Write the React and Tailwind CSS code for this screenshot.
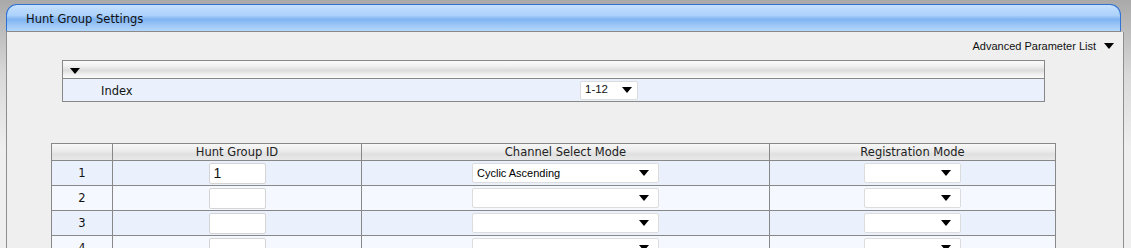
import React from "react";

const Tri = ({ className = "" }) => (
  <svg width="10" height="6" viewBox="0 0 10 6" className={className}>
    <path d="M0 0 L10 0 L5 6 Z" fill="#000" />
  </svg>
);

const Select = ({ w, text }) => (
  <div
    className={`${w} h-[20px] bg-white border border-[#dcdcdc] rounded-[2px] flex items-center justify-between pl-[4px] pr-[9px] font-['Liberation_Sans',Arial,sans-serif] text-[11px] text-black`}
  >
    <span>{text}</span>
    <Tri />
  </div>
);

const rows = [
  { n: 1, id: "1", mode: "Cyclic Ascending" },
  { n: 2, id: "", mode: "" },
  { n: 3, id: "", mode: "" },
  { n: 4, id: "", mode: "" },
];

export default function App() {
  const verdana = "font-['DejaVu_Sans',Verdana,sans-serif] text-[11.5px]";
  return (
    <div className="w-[1131px] h-[248px] overflow-hidden bg-gradient-to-b from-[#a9a9a9] via-[#d9d9d9] via-[30%] to-[#efefef] to-[60%] pl-[6px] pt-[4px]">
      <div className="w-[1118px] flex flex-col">
        {/* header */}
        <div
          className={`w-[1115px] h-[27px] rounded-t-[11px] border border-b-0 border-[#2f72d4] bg-[linear-gradient(to_bottom,#c6e1fe_0%,#abd1fb_40%,#7fb3f1_55%,#99c5f6_75%,#b4d7fb_100%)] flex items-center pl-[19px] pt-[3px] ${verdana} text-[#111]`}
        >
          Hunt Group Settings
        </div>
        <div className="w-[1115px] h-px bg-[#8a8a8a]" />
        {/* body */}
        <div className="border-l border-r border-[#8e8e8e] bg-[#efefef] h-[220px]">
          <div className="h-[28px] flex items-center justify-end pr-[9px] gap-[8px] font-['Liberation_Sans',Arial,sans-serif] text-[11px] text-[#111]">
            <span>Advanced Parameter List</span>
            <Tri />
          </div>

          {/* index box */}
          <div className="ml-[55px] w-[983px] border border-[#888] flex flex-col">
            <div className="h-[17px] bg-[linear-gradient(to_bottom,#fbfbfb_0%,#f0f0f0_30%,#dcdcdc_55%,#f0f0f0_80%,#fafafa_100%)] flex items-center pl-[7px]">
              <Tri className="mt-[2px]" />
            </div>
            <div className="h-px bg-[#888]" />
            <div className="h-[22px] bg-[#eaf1fd] flex items-center">
              <span className={`${verdana} text-[#111] ml-[38px] w-[479px] mt-[3px]`}>Index</span>
              <div className="w-[58px] h-[19px] bg-white border border-[#dcdcdc] rounded-[2px] flex items-center justify-between pl-[4px] pr-[5px] font-['Liberation_Sans',Arial,sans-serif] text-[11.5px] text-[#111]">
                <span>1-12</span>
                <Tri />
              </div>
            </div>
          </div>

          {/* main table */}
          <table className="ml-[44px] mt-[41px] border-collapse table-fixed w-[1005px]">
            <colgroup>
              <col className="w-[61px]" />
              <col className="w-[249px]" />
              <col className="w-[408px]" />
              <col className="w-[286px]" />
            </colgroup>
            <thead>
              <tr className="h-[17px] bg-[linear-gradient(to_bottom,#f7f7f7_0%,#ececec_40%,#e0e0e0_60%,#eaeaea_100%)]">
                {["", "Hunt Group ID", "Channel Select Mode", "Registration Mode"].map((h, i) => (
                  <th
                    key={i}
                    className={`border border-[#888] p-0 font-normal text-center ${verdana} text-[#222] leading-[15px]`}
                  >
                    {h}
                  </th>
                ))}
              </tr>
            </thead>
            <tbody>
              {rows.map((r, i) => (
                <tr key={r.n} className={`h-[25px] ${i % 2 === 0 ? "bg-[#eaf1fd]" : "bg-[#f5f8fe]"}`}>
                  <td className={`border border-[#888] p-0 pt-[2px] text-center ${verdana} text-[#111]`}>{r.n}</td>
                  <td className="border border-[#888] p-0">
                    <div className="flex justify-center">
                      <div className="w-[57px] h-[21px] bg-white border border-[#d4d4d4] rounded-[2px] flex items-center pl-[4px] font-['Liberation_Sans',Arial,sans-serif] text-[14px] text-[#111]">
                        {r.id}
                      </div>
                    </div>
                  </td>
                  <td className="border border-[#888] p-0">
                    <div className="flex justify-center">
                      <Select w="w-[187px]" text={r.mode} />
                    </div>
                  </td>
                  <td className="border border-[#888] p-0">
                    <div className="flex justify-center">
                      <Select w="w-[97px]" text="" />
                    </div>
                  </td>
                </tr>
              ))}
            </tbody>
          </table>
        </div>
      </div>
    </div>
  );
}
